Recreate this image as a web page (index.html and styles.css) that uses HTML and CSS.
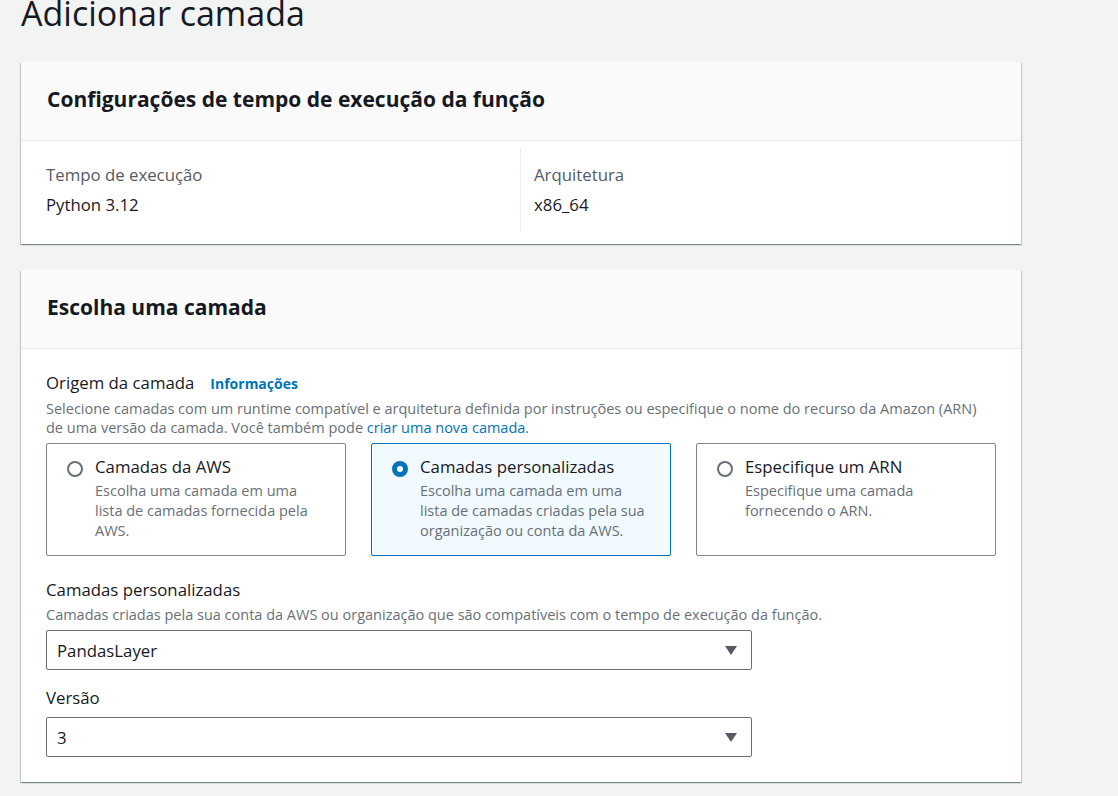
FILE: index.html
```html
<!DOCTYPE html>
<html lang="pt">
<head>
<meta charset="utf-8">
<title>Adicionar camada</title>
<link rel="stylesheet" href="styles.css">
</head>
<body>
<div class="page">
  <h1 class="title">Adicionar camada</h1>

  <section class="card">
    <div class="card-header"><h2>Configurações de tempo de execução da função</h2></div>
    <div class="card-body cols">
      <div class="col">
        <div class="kv-label">Tempo de execução</div>
        <div class="kv-value">Python 3.12</div>
      </div>
      <div class="col col-right">
        <div class="kv-label">Arquitetura</div>
        <div class="kv-value">x86_64</div>
      </div>
    </div>
  </section>

  <section class="card card-second">
    <div class="card-header"><h2>Escolha uma camada</h2></div>
    <div class="card-body form">
      <div class="field">
        <div class="field-label">Origem da camada <a class="info" href="#">Informações</a></div>
        <p class="field-desc">Selecione camadas com um runtime compatível e arquitetura definida por instruções ou especifique o nome do recurso da Amazon (ARN) de uma versão da camada. Você também pode <a class="link" href="#">criar uma nova camada</a>.</p>
        <div class="tiles">
          <div class="tile">
            <span class="radio"></span>
            <div class="tile-text">
              <div class="tile-title">Camadas da AWS</div>
              <div class="tile-desc">Escolha uma camada em uma lista de camadas fornecida pela AWS.</div>
            </div>
          </div>
          <div class="tile selected">
            <span class="radio checked"></span>
            <div class="tile-text">
              <div class="tile-title">Camadas personalizadas</div>
              <div class="tile-desc">Escolha uma camada em uma lista de camadas criadas pela sua organização ou conta da AWS.</div>
            </div>
          </div>
          <div class="tile">
            <span class="radio"></span>
            <div class="tile-text">
              <div class="tile-title">Especifique um ARN</div>
              <div class="tile-desc">Especifique uma camada fornecendo o ARN.</div>
            </div>
          </div>
        </div>
      </div>

      <div class="field field-layers">
        <div class="field-label">Camadas personalizadas</div>
        <p class="field-desc">Camadas criadas pela sua conta da AWS ou organização que são compatíveis com o tempo de execução da função.</p>
        <div class="select select-first"><span>PandasLayer</span><span class="caret"></span></div>
      </div>

      <div class="field field-version">
        <div class="field-label">Versão</div>
        <div class="select select-version"><span>3</span><span class="caret"></span></div>
      </div>
    </div>
  </section>
</div>
</body>
</html>
```

FILE: styles.css
```css
html, body {
  margin: 0;
  padding: 0;
  background: #f2f3f3;
}
body {
  font-family: "Open Sans", "Noto Sans", sans-serif;
  color: #16191f;
  width: 1118px;
  height: 796px;
  overflow: hidden;
}
.page {
  padding: 0 97px 0 21px;
  display: flex;
  flex-direction: column;
}
.title {
  margin: -7px 0 29px 0;
  font-size: 34px;
  line-height: 40px;
  font-weight: 400;
}
.card {
  background: #fff;
  box-shadow: 0 1px 1px 0 rgba(0, 28, 36, 0.3), 1px 1px 1px 0 rgba(0, 28, 36, 0.15), -1px 1px 1px 0 rgba(0, 28, 36, 0.15);
}
.card-second {
  margin-top: 26px;
}
.card-header {
  background: #fafafa;
  border-bottom: 1px solid #eaeded;
  box-sizing: content-box;
  display: flex;
  align-items: center;
  padding: 0 26px 4px 26px;
  height: 74px;
}
.card-header h2 {
  margin: 0;
  font-size: 21px;
  line-height: 28px;
  font-weight: 700;
}
.cols {
  display: grid;
  grid-template-columns: 499px 1fr;
  padding: 7px 0 12px 0;
}
.col {
  padding: 15px 25px;
}
.col-right {
  border-left: 1px solid #eaeded;
  padding-left: 13px;
}
.kv-label {
  color: #545b64;
  font-size: 16.8px;
  line-height: 24px;
}
.kv-value {
  font-size: 16.8px;
  line-height: 24px;
  margin-top: 6px;
}
.form {
  padding: 23px 25px 25px 25px;
  display: flex;
  flex-direction: column;
}
.field-label {
  font-size: 16.8px;
  line-height: 22px;
  display: flex;
  align-items: baseline;
  gap: 16px;
}
.info {
  font-size: 14px;
  font-weight: 700;
  color: #0073bb;
  text-decoration: none;
}
.field-desc {
  font-size: 14.5px;
  line-height: 19px;
  color: #687078;
  margin: 4px 0 0 0;
}
.link {
  color: #0073bb;
  text-decoration: none;
}
.tiles {
  display: grid;
  grid-template-columns: 300px 300px 300px;
  gap: 25px;
  margin-top: 6px;
}
.tile {
  border: 1px solid #7d868f;
  border-radius: 2px;
  box-sizing: border-box;
  height: 113px;
  padding: 12px 22px 12px 20px;
  display: flex;
  gap: 12px;
}
.tile.selected {
  border-color: #0073bb;
  background: #f1faff;
}
.radio {
  flex: none;
  width: 12px;
  height: 12px;
  border: 2px solid #687078;
  border-radius: 50%;
  margin-top: 5px;
  box-sizing: content-box;
}
.radio.checked {
  border: 5px solid #0073bb;
  width: 6px;
  height: 6px;
  background: #fff;
}
.tile-title {
  font-size: 16.8px;
  line-height: 22px;
}
.tile-desc {
  font-size: 14.5px;
  line-height: 20px;
  color: #687078;
  margin-top: 3px;
}
.field-layers {
  margin-top: 23px;
}
.field-version {
  margin-top: 17px;
}
.select {
  width: 706px;
  height: 40px;
  box-sizing: border-box;
  border: 1px solid #687078;
  border-radius: 2px;
  display: flex;
  align-items: center;
  justify-content: space-between;
  padding: 0 14px 0 10px;
  font-size: 16.8px;
}
.select-first {
  margin-top: 6px;
}
.select-version {
  margin-top: 8px;
}
.caret {
  width: 0;
  height: 0;
  border-left: 6px solid transparent;
  border-right: 6px solid transparent;
  border-top: 9px solid #545b64;
}
```
